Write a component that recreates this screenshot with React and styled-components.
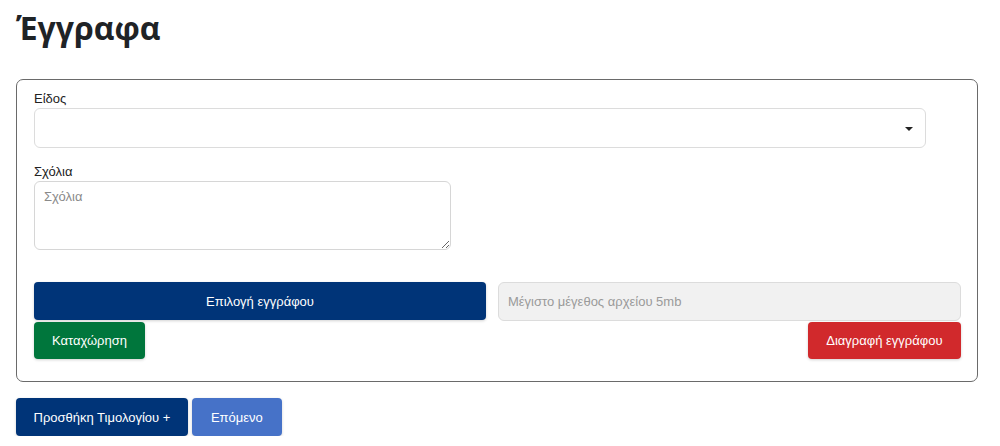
import React from "react";
import styled, { createGlobalStyle } from "styled-components";

const Global = createGlobalStyle`
  body { margin: 0; background: #fff; font-family: "Liberation Sans", Arial, sans-serif; color: #212529; }
  * { box-sizing: border-box; }
`;

const Page = styled.div`
  padding: 8px 22px 0 16px;
`;

const Title = styled.h1`
  margin: 0 0 32px 0;
  font-family: "Open Sans", "Noto Sans", sans-serif;
  font-weight: 700;
  font-size: 32px;
  line-height: 39px;
  color: #1f2326;
`;

const Card = styled.div`
  border: 1px solid #6a6a6a;
  border-radius: 7px;
  padding: 11px 16px 22px 17px;
`;

const Field = styled.div`
  display: flex;
  flex-direction: column;
  margin-bottom: ${(p) => p.$mb || 0}px;
`;

const Label = styled.label`
  font-size: 13px;
  line-height: 16px;
  color: #222;
  margin-bottom: 1px;
`;

const SelectBox = styled.div`
  position: relative;
  width: 892px;
  height: 40px;
  border: 1px solid #dcdcdc;
  border-radius: 6px;
  background: #fff;
`;

const Caret = styled.span`
  position: absolute;
  right: 12px;
  top: 18px;
  width: 0;
  height: 0;
  border-left: 4px solid transparent;
  border-right: 4px solid transparent;
  border-top: 4px solid #222;
`;

const TextArea = styled.textarea`
  width: 417px;
  height: 69px;
  border: 1px solid #d6d6d6;
  border-radius: 6px;
  padding: 7px 9px;
  font-family: "Liberation Sans", Arial, sans-serif;
  font-size: 13px;
  resize: vertical;
  &::placeholder { color: #8a8a8a; }
`;

const FileRow = styled.div`
  display: grid;
  grid-template-columns: 452px 1fr;
  column-gap: 12px;
  margin-top: 32px;
`;

const Btn = styled.button`
  height: ${(p) => p.$h || 38}px;
  border: none;
  border-radius: 4px;
  background: ${(p) => p.$bg};
  color: #fff;
  font-family: "Liberation Sans", Arial, sans-serif;
  font-size: 13px;
  padding: 0 ${(p) => p.$px || 16}px;
  box-shadow: 0 1px 3px rgba(0, 0, 0, 0.18);
  cursor: pointer;
`;

const DisabledInput = styled.input`
  height: 39px;
  border: 1px solid #dcdcdc;
  border-radius: 6px;
  background: #f1f1f1;
  padding: 0 9px;
  font-family: "Liberation Sans", Arial, sans-serif;
  font-size: 13px;
  &::placeholder { color: #9a9a9a; }
`;

const ActionRow = styled.div`
  display: flex;
  justify-content: space-between;
  margin-top: 1px;
`;

const Footer = styled.div`
  display: flex;
  gap: 4px;
  margin-top: 16px;
`;

export default function App() {
  return (
    <>
      <Global />
      <Page>
        <Title>Έγγραφα</Title>
        <Card>
          <Field $mb={16}>
            <Label>Είδος</Label>
            <SelectBox>
              <Caret />
            </SelectBox>
          </Field>
          <Field>
            <Label>Σχόλια</Label>
            <TextArea placeholder="Σχόλια" />
          </Field>
          <FileRow>
            <Btn $bg="#003478">Επιλογή εγγράφου</Btn>
            <DisabledInput disabled placeholder="Μέγιστο μέγεθος αρχείου 5mb" />
          </FileRow>
          <ActionRow>
            <Btn $bg="#00763c" $h={37} $px={18}>Καταχώρηση</Btn>
            <Btn $bg="#d1292c" $h={37} $px={18.5}>Διαγραφή εγγράφου</Btn>
          </ActionRow>
        </Card>
        <Footer>
          <Btn $bg="#003478" $px={17.5}>Προσθήκη Τιμολογίου +</Btn>
          <Btn $bg="#4672c8" $px={19}>Επόμενο</Btn>
        </Footer>
      </Page>
    </>
  );
}
